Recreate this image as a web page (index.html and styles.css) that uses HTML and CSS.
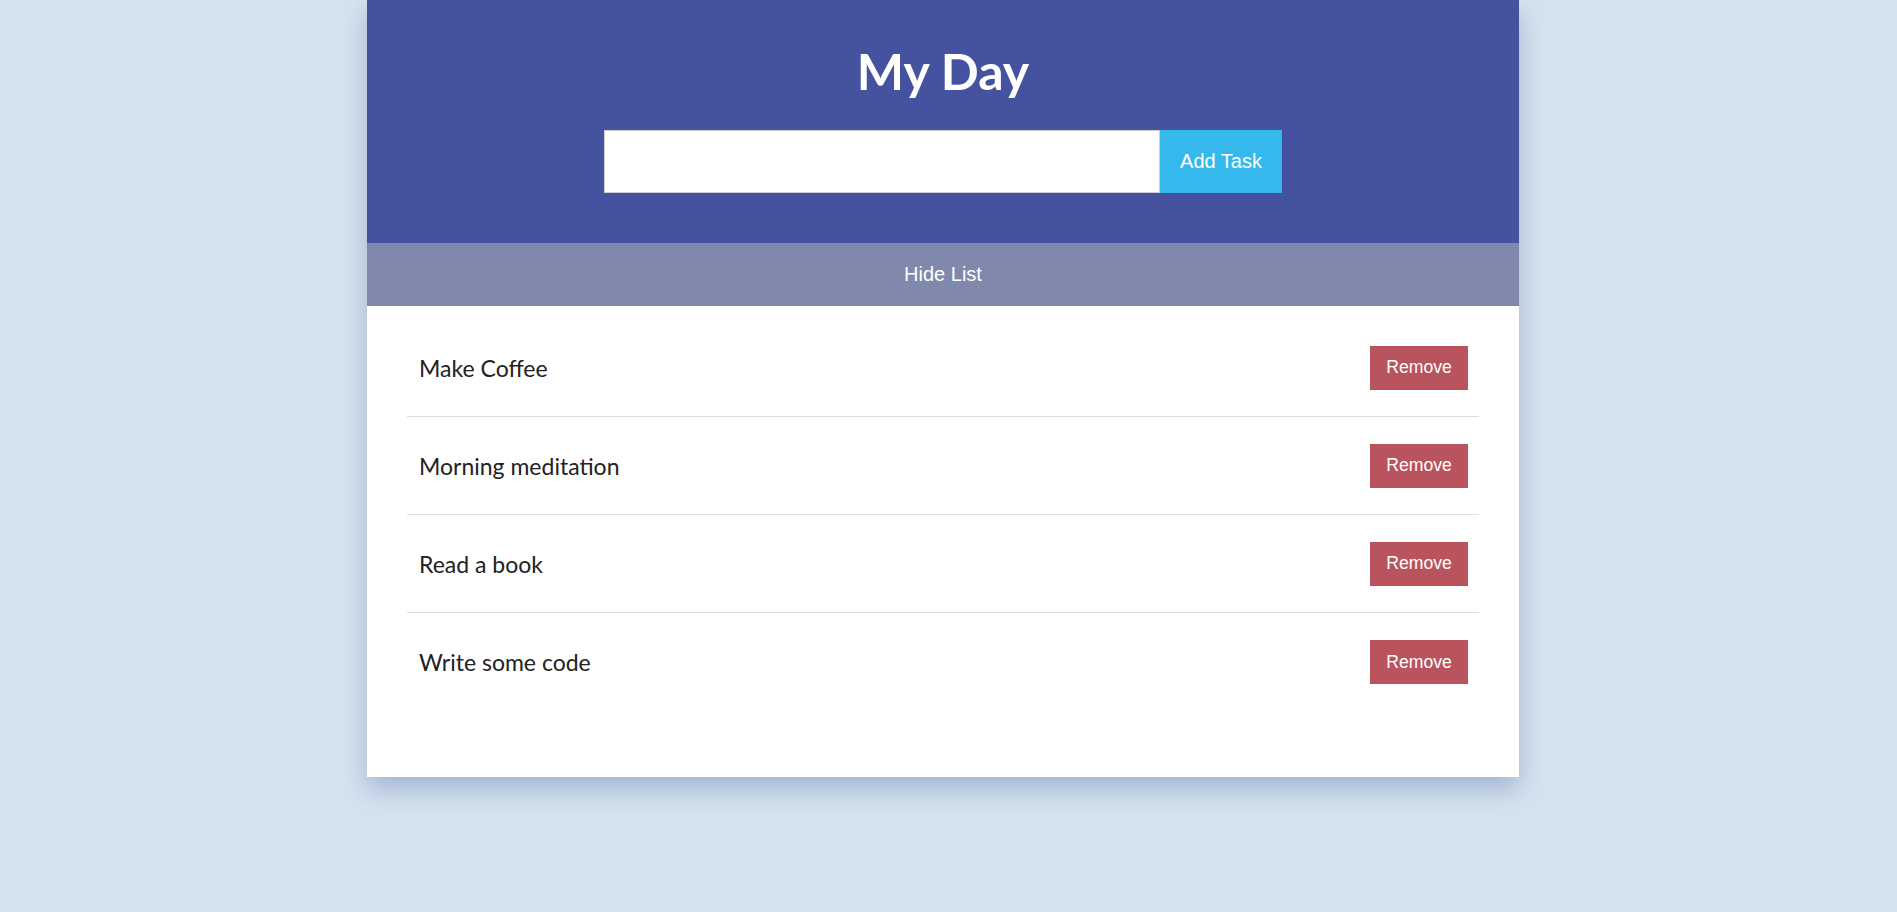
FILE: index.html
```html
<!DOCTYPE html>
<html lang="en">
<head>
<meta charset="utf-8">
<title>My Day</title>
<link rel="stylesheet" href="styles.css">
</head>
<body>
<div class="page">
  <main class="app">
    <header class="header">
      <h1 class="title">My Day</h1>
      <form class="add-form">
        <input class="task-input" type="text">
        <button class="add-btn" type="button">Add Task</button>
      </form>
    </header>
    <button class="toggle-btn" type="button">Hide List</button>
    <ul class="task-list">
      <li class="task"><span class="task-name">Make Coffee</span><button class="remove-btn" type="button">Remove</button></li>
      <li class="task"><span class="task-name">Morning meditation</span><button class="remove-btn" type="button">Remove</button></li>
      <li class="task"><span class="task-name">Read a book</span><button class="remove-btn" type="button">Remove</button></li>
      <li class="task"><span class="task-name">Write some code</span><button class="remove-btn" type="button">Remove</button></li>
    </ul>
  </main>
</div>
</body>
</html>
```
FILE: styles.css
```css
* { box-sizing: border-box; }

html, body {
  margin: 0;
  padding: 0;
  background: #d5e3ef;
  height: 100%;
}

body {
  font-family: "Lato", "Liberation Sans", sans-serif;
  color: #222;
}

.page {
  display: flex;
  justify-content: center;
  padding-right: 11px;
}

.app {
  width: 1152px;
  background: #fff;
  box-shadow: 0 12px 24px rgba(70, 95, 160, 0.35);
}

.header {
  background: #4552a0;
  padding: 41px 0 50px;
  display: flex;
  flex-direction: column;
  align-items: center;
}

.title {
  margin: 0;
  font-family: "Lato", sans-serif;
  font-weight: 700;
  font-size: 50px;
  line-height: 61px;
  color: #fff;
}

.add-form {
  margin: 28px 0 0;
  display: flex;
}

.task-input {
  width: 556px;
  height: 63px;
  margin: 0;
  border: 1px solid #d0d0d0;
  background: #fff;
  outline: none;
  font-size: 20px;
  padding: 0 12px;
}

.add-btn {
  width: 122px;
  height: 63px;
  margin: 0;
  border: none;
  background: #35b9ec;
  color: #fff;
  font-family: "Liberation Sans", Arial, sans-serif;
  font-size: 20px;
  padding: 0;
  cursor: pointer;
}

.toggle-btn {
  display: block;
  width: 100%;
  height: 63px;
  margin: 0;
  border: none;
  background: #8088ac;
  color: #fff;
  font-family: "Liberation Sans", Arial, sans-serif;
  font-size: 20px;
  padding: 0;
  cursor: pointer;
}

.task-list {
  list-style: none;
  margin: 0;
  padding: 13px 40px 66px;
}

.task {
  display: flex;
  align-items: center;
  justify-content: space-between;
  height: 98px;
  padding: 0 11px 0 12px;
  border-bottom: 1px solid #dddddd;
}

.task:last-child {
  border-bottom: none;
}

.task-name {
  font-size: 23px;
  color: #222;
}

.remove-btn {
  width: 98px;
  height: 44px;
  margin: 0;
  border: none;
  background: #b9545e;
  color: #fff;
  font-family: "Liberation Sans", Arial, sans-serif;
  font-size: 17.6px;
  padding: 0;
  cursor: pointer;
}
```
